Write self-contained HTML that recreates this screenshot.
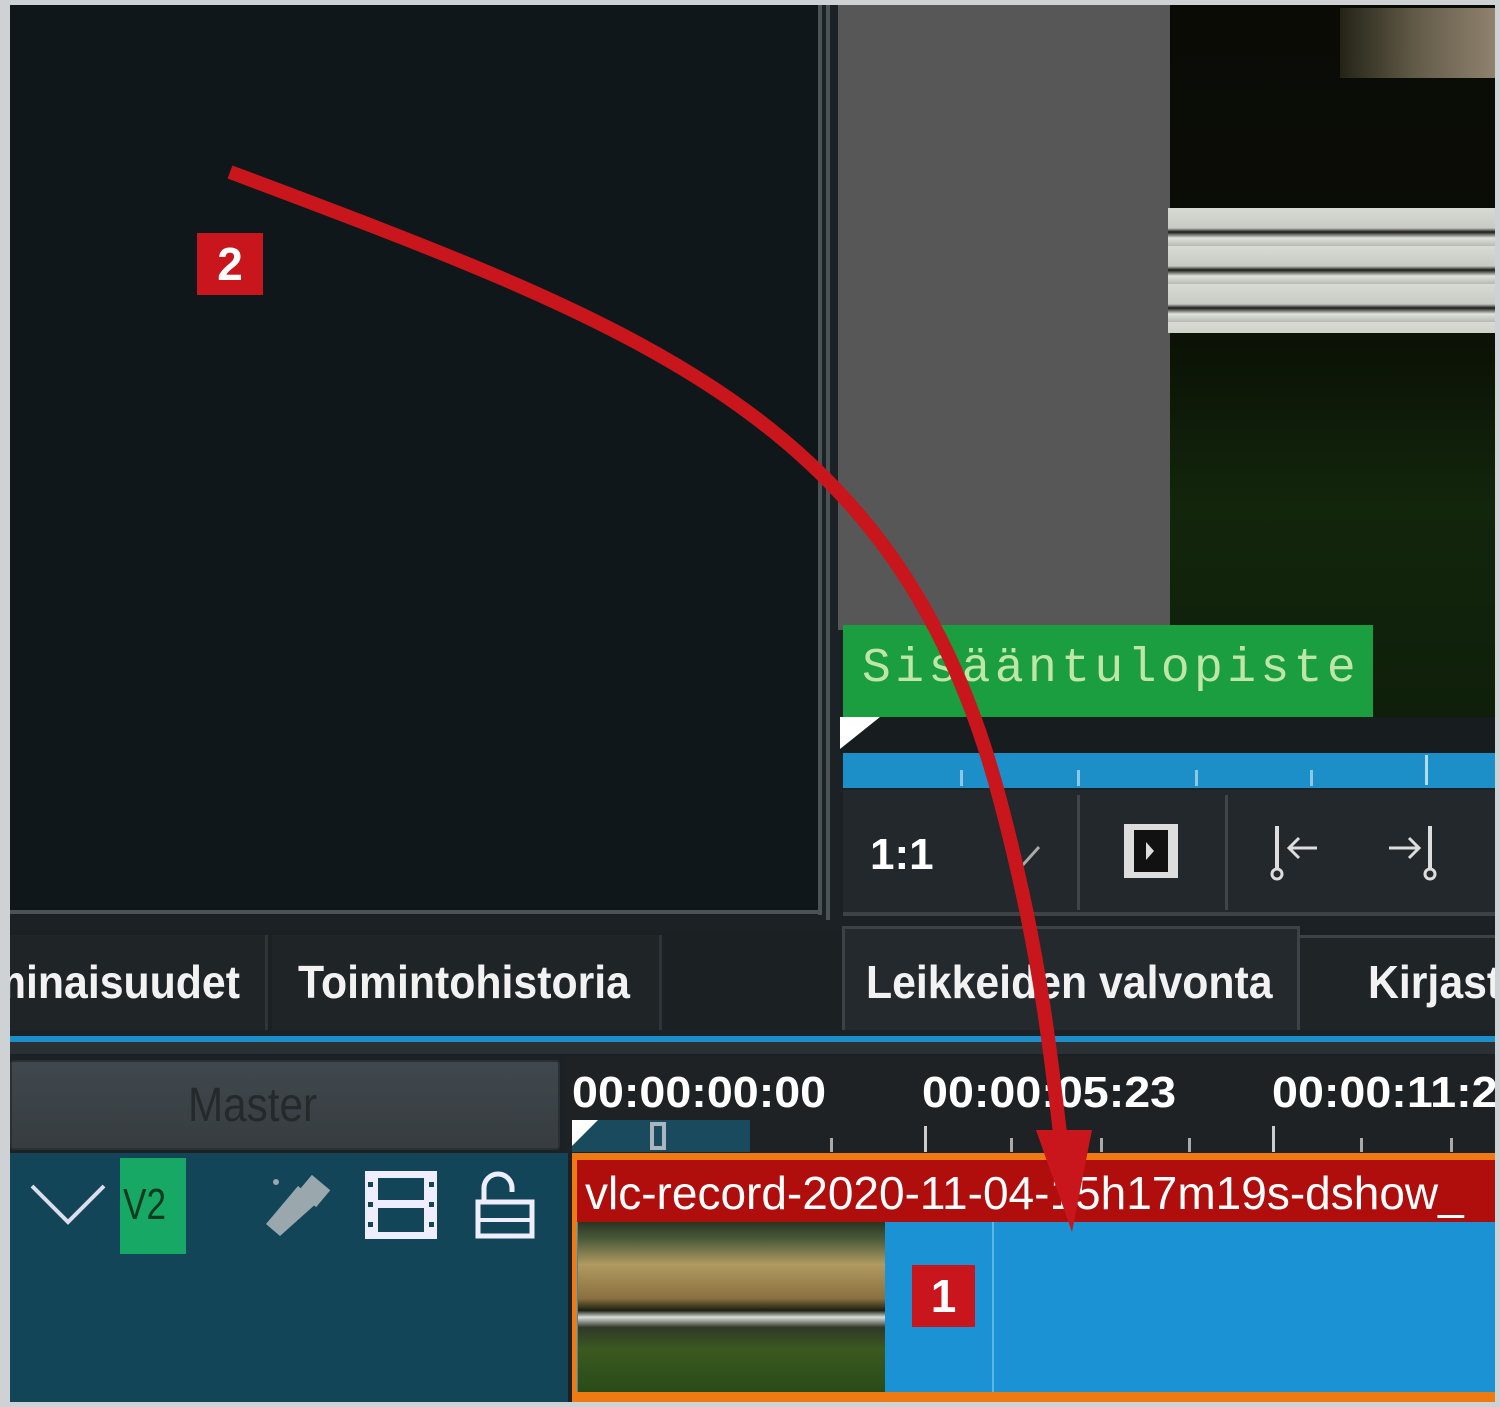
<!DOCTYPE html>
<html><head><meta charset="utf-8"><style>
*{margin:0;padding:0;box-sizing:border-box}
body{width:1500px;height:1407px;background:#cfd2d4;position:relative;overflow:hidden;font-family:"Liberation Sans",sans-serif}
.a{position:absolute}
.tab{position:absolute;color:#f2f2f2;font-size:46px;font-weight:bold;transform:scaleX(0.93);transform-origin:left top;white-space:nowrap}
.tc{position:absolute;color:#fff;font-size:44px;font-weight:bold;font-family:"Liberation Sans",sans-serif;transform:scaleX(1.06);transform-origin:left top;white-space:nowrap}
</style></head><body>
<div class="a" style="left:10px;top:5px;width:1485px;height:1397px;background:#1c2125"></div>
<div class="a" style="left:10px;top:5px;width:808px;height:905px;background:#0f171b"></div>
<div class="a" style="left:818px;top:5px;width:4px;height:910px;background:#4c5357"></div>
<div class="a" style="left:826px;top:5px;width:4px;height:915px;background:#4c5357"></div>
<div class="a" style="left:10px;top:910px;width:812px;height:4px;background:#4c5357"></div>
<div class="a" style="left:838px;top:5px;width:332px;height:625px;background:#575757"></div>
<div class="a" style="left:1170px;top:5px;width:325px;height:712px;background:linear-gradient(180deg,#0b0b06 0%,#0a0c05 25%,#0c1406 50%,#12260c 70%,#0f1f0a 100%)"></div>
<div class="a" style="left:1340px;top:8px;width:155px;height:70px;background:linear-gradient(90deg,#2a2a1a,#7a705a,#b0a088);opacity:.8"></div>
<div class="a" style="left:1168px;top:208px;width:327px;height:125px;background:repeating-linear-gradient(180deg,#d8dad4 0,#c8cac4 20px,#1a1a16 24px,#e0e2dc 30px,#b8bab2 38px)"></div>
<div class="a" style="left:843px;top:625px;width:530px;height:92px;background:#1a9e3f"></div>
<div class="a" style="left:862px;top:642px;font-family:'Liberation Mono',monospace;font-size:48px;color:#bfe6a8;letter-spacing:4.4px">Sisääntulopiste</div>
<div class="a" style="left:840px;top:717px;width:655px;height:36px;background:#171c1f"></div>
<div class="a" style="left:840px;top:717px;width:0;height:0;border-top:32px solid #fff;border-right:40px solid transparent"></div>
<div class="a" style="left:843px;top:753px;width:652px;height:35px;background:#1d8fc8"></div>
<div class="a" style="left:960px;top:770px;width:3px;height:16px;background:#8cc8e6"></div>
<div class="a" style="left:1077px;top:770px;width:3px;height:16px;background:#8cc8e6"></div>
<div class="a" style="left:1195px;top:770px;width:3px;height:16px;background:#8cc8e6"></div>
<div class="a" style="left:1310px;top:770px;width:3px;height:16px;background:#8cc8e6"></div>
<div class="a" style="left:1425px;top:755px;width:3px;height:30px;background:#b0dcf0"></div>
<div class="a" style="left:843px;top:790px;width:652px;height:126px;background:#23282c;border-bottom:4px solid #3c4246"></div>
<div class="a" style="left:1077px;top:795px;width:3px;height:115px;background:#3f4548"></div>
<div class="a" style="left:1225px;top:795px;width:3px;height:115px;background:#3f4548"></div>
<div class="a" style="left:870px;top:830px;color:#fff;font-size:44px;font-weight:bold">1:1</div>
<svg class="a" style="left:1005px;top:835px" width="40" height="40"><path d="M8 24 L16 32 L34 12" stroke="#aaa" stroke-width="3" fill="none"/></svg>
<svg class="a" style="left:1120px;top:820px" width="62" height="62"><rect x="4" y="4" width="54" height="54" fill="#ddd"/><rect x="14" y="10" width="34" height="42" fill="#111"/><path d="M26 22 L34 31 L26 40Z" fill="#ddd"/></svg>
<svg class="a" style="left:1265px;top:820px" width="70" height="70"><line x1="12" y1="6" x2="12" y2="48" stroke="#ddd" stroke-width="4"/><circle cx="12" cy="54" r="5" stroke="#ddd" stroke-width="3" fill="none"/><path d="M52 28 H24 M34 18 L24 28 L34 38" stroke="#ddd" stroke-width="3" fill="none"/></svg>
<svg class="a" style="left:1385px;top:820px" width="60" height="70"><line x1="45" y1="6" x2="45" y2="48" stroke="#ddd" stroke-width="4"/><circle cx="45" cy="54" r="5" stroke="#ddd" stroke-width="3" fill="none"/><path d="M4 28 H34 M24 18 L34 28 L24 38" stroke="#ddd" stroke-width="3" fill="none"/></svg>
<div class="a" style="left:10px;top:930px;width:1485px;height:100px;background:#1b2023"></div>
<div class="a" style="left:10px;top:935px;width:258px;height:95px;background:#1f2427;border-right:3px solid #2e3438;overflow:hidden"><div class="tab" style="left:-22px;top:20px">minaisuudet</div></div>
<div class="a" style="left:272px;top:935px;width:390px;height:95px;background:#1f2427;border-right:3px solid #2e3438"></div>
<div class="a" style="left:842px;top:926px;width:458px;height:104px;background:#24292d;border:3px solid #3c4246;border-bottom:none"></div>
<div class="a" style="left:1300px;top:935px;width:195px;height:95px;background:#1f2427;border-top:3px solid #3c4246"></div>
<div class="tab" style="left:298px;top:955px">Toimintohistoria</div>
<div class="tab" style="left:866px;top:955px">Leikkeiden valvonta</div>
<div class="a" style="left:1300px;top:935px;width:195px;height:95px;overflow:hidden"><div class="tab" style="left:68px;top:20px">Kirjasto</div></div>
<div class="a" style="left:10px;top:1036px;width:1485px;height:6px;background:#1d8fc8"></div>
<div class="a" style="left:10px;top:1042px;width:1485px;height:12px;background:#2a3034"></div>
<div class="a" style="left:10px;top:1060px;width:550px;height:90px;background:linear-gradient(#41484d,#363c40);border-radius:4px;border:2px solid #2b3034"></div>
<div class="a" style="left:188px;top:1078px;color:#24292c;font-size:48px;transform:scaleX(.88);transform-origin:left top">Master</div>
<div class="a" style="left:565px;top:1056px;width:930px;height:96px;background:#1e2225"></div>
<div class="a" style="left:565px;top:1056px;width:930px;height:70px;overflow:hidden">
<div class="tc" style="left:7px;top:12px">00:00:00:00</div>
<div class="tc" style="left:357px;top:12px">00:00:05:23</div>
<div class="tc" style="left:707px;top:12px">00:00:11:23</div>
</div>
<div class="a" style="left:572px;top:1120px;width:178px;height:32px;background:#1a4a5e"></div>
<div class="a" style="left:572px;top:1120px;width:0;height:0;border-top:26px solid #fff;border-right:26px solid transparent"></div>
<div class="a" style="left:650px;top:1122px;width:16px;height:28px;border:4px solid #a9b6bd"></div>
<div class="a" style="left:924px;top:1126px;width:3px;height:26px;background:#ccc"></div>
<div class="a" style="left:1272px;top:1126px;width:3px;height:26px;background:#ccc"></div>
<div class="a" style="left:830px;top:1138px;width:3px;height:14px;background:#aaa"></div>
<div class="a" style="left:1010px;top:1138px;width:3px;height:14px;background:#aaa"></div>
<div class="a" style="left:1100px;top:1138px;width:3px;height:14px;background:#aaa"></div>
<div class="a" style="left:1188px;top:1138px;width:3px;height:14px;background:#aaa"></div>
<div class="a" style="left:1360px;top:1138px;width:3px;height:14px;background:#aaa"></div>
<div class="a" style="left:1450px;top:1138px;width:3px;height:14px;background:#aaa"></div>
<div class="a" style="left:10px;top:1153px;width:558px;height:249px;background:#134558"></div>
<svg class="a" style="left:28px;top:1180px" width="80" height="50"><path d="M4 6 L40 42 L76 6" stroke="#dde" stroke-width="4" fill="none"/></svg>
<div class="a" style="left:120px;top:1158px;width:66px;height:96px;background:#17a866"></div>
<div class="a" style="left:123px;top:1180px;font-size:44px;color:#0a3a20;transform:scaleX(.8);transform-origin:left top">V2</div>
<svg class="a" style="left:258px;top:1170px" width="80" height="70"><path d="M40 16 L60 32 L22 66 L8 54Z" fill="#9aa8ae"/><rect x="44" y="10" width="24" height="22" transform="rotate(40 56 21)" fill="#9aa8ae"/><circle cx="18" cy="12" r="3" fill="#9aa8ae"/></svg>
<svg class="a" style="left:362px;top:1168px" width="78" height="74"><rect x="3" y="3" width="72" height="68" fill="#eef"/><rect x="16" y="10" width="46" height="22" fill="#134558"/><rect x="16" y="40" width="46" height="24" fill="#134558"/><rect x="6" y="14" width="5" height="5" fill="#134558"/><rect x="6" y="34" width="5" height="5" fill="#134558"/><rect x="6" y="54" width="5" height="5" fill="#134558"/><rect x="67" y="14" width="5" height="5" fill="#134558"/><rect x="67" y="34" width="5" height="5" fill="#134558"/><rect x="67" y="54" width="5" height="5" fill="#134558"/></svg>
<svg class="a" style="left:472px;top:1170px" width="66" height="72"><path d="M12 30 V18 A14 14 0 0 1 40 18 V22" stroke="#eef" stroke-width="5" fill="none"/><rect x="6" y="32" width="54" height="34" stroke="#eef" stroke-width="5" fill="none"/><line x1="6" y1="50" x2="60" y2="50" stroke="#eef" stroke-width="4"/></svg>
<div class="a" style="left:572px;top:1153px;width:923px;height:249px;background:#ef7a12"></div>
<div class="a" style="left:577px;top:1160px;width:918px;height:62px;background:#b00d0d"></div>
<div class="a" style="left:585px;top:1166px;width:910px;overflow:hidden;height:56px"><div style="color:#fff;font-size:46px;white-space:nowrap;transform:scaleX(1.0);transform-origin:left top">vlc-record-2020-11-04-15h17m19s-dshow_</div></div>
<div class="a" style="left:577px;top:1222px;width:918px;height:170px;background:#1a92d4"></div>
<div class="a" style="left:992px;top:1222px;width:2px;height:170px;background:#5bb6e6"></div>
<div class="a" style="left:578px;top:1222px;width:307px;height:170px;background:linear-gradient(180deg,#2a3520 0%,#4a5a3a 10%,#b09a60 25%,#8a7040 45%,#1a2010 52%,#d8dcd8 56%,#303828 62%,#3a5a20 75%,#2a4a18 100%)"></div>
<svg class="a" style="left:0;top:0" width="1500" height="1407">
<path d="M230 172 C 650 330, 900 420, 1000 800 C 1040 950, 1050 1050, 1062 1150" stroke="#c8161c" stroke-width="14" fill="none"/>
<path d="M1036 1130 L1092 1130 L1072 1232Z" fill="#c8161c"/>
</svg>
<div class="a" style="left:197px;top:233px;width:66px;height:62px;background:#c8161c;color:#fff;font-size:46px;font-weight:bold;text-align:center;line-height:62px">2</div>
<div class="a" style="left:912px;top:1265px;width:63px;height:62px;background:#c8161c;color:#fff;font-size:46px;font-weight:bold;text-align:center;line-height:62px">1</div>
</body></html>
